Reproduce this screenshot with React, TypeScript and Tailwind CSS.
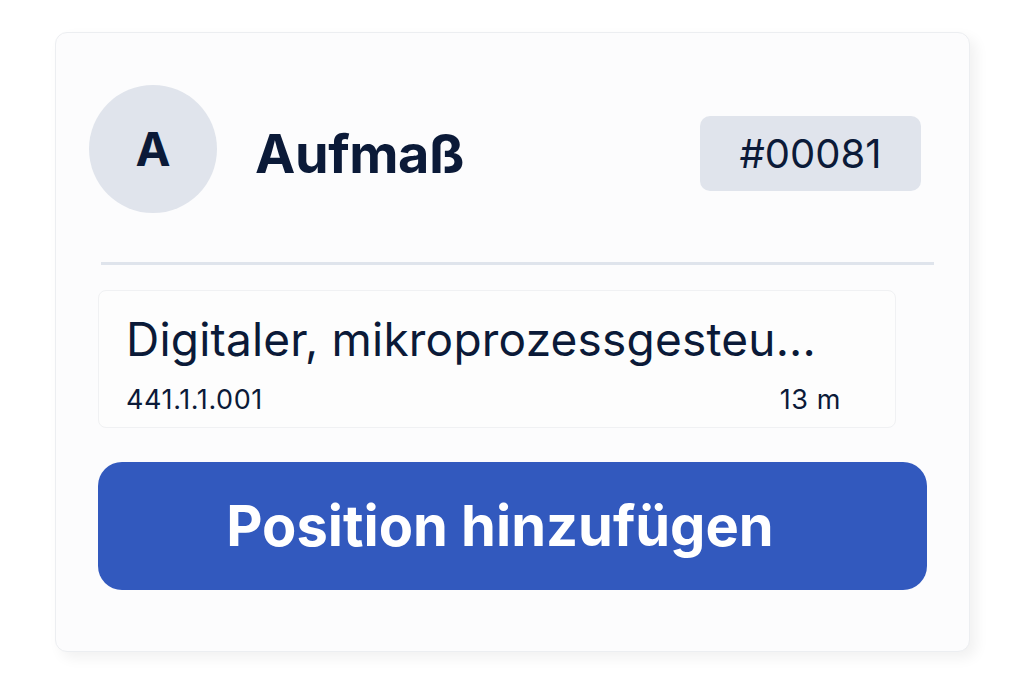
export default function App() {
  return (
    <div
      className="w-[1024px] h-[683px] bg-white pt-[32px] pl-[55px]"
      style={{ fontFamily: "Inter, 'Noto Sans', sans-serif" }}
    >
      <div className="w-[915px] h-[620px] rounded-[12px] bg-[#fcfcfd] border border-[#eceef1] shadow-[6px_6px_14px_rgba(0,0,0,0.06)] flex flex-col">
        {/* header */}
        <div className="flex items-center pt-[52px] pl-[33px] pr-[48px]">
          <div className="w-[128px] h-[128px] rounded-full bg-[#e0e4ec] flex items-center justify-center text-[47px] font-bold text-[#0b1a38]">
            A
          </div>
          <div className="ml-[38px] mt-[8px] text-[54px] font-bold text-[#0b1a38] tracking-[-0.4px]">Aufmaß</div>
          <div className="ml-auto mt-[9px] w-[221px] h-[75px] rounded-[10px] bg-[#e0e4ec] flex items-center justify-center text-[40px] text-[#0b1a38]">
            #00081
          </div>
        </div>

        <div className="mt-[49px] ml-[45px] mr-[35px] h-[3px] bg-[#dfe4ec]" />

        {/* position row */}
        <div className="mt-[25px] ml-[42px] w-[798px] h-[138px] rounded-[8px] border border-[#f0f1f3] bg-[#fdfdfd] pl-[27px] pr-[54px] pt-[20px]">
          <div className="text-[46px] text-[#0b1a38] leading-[56px] tracking-[0.2px]">Digitaler, mikroprozessgesteu...</div>
          <div className="mt-[17px] flex justify-between text-[27px] text-[#0b1a38] leading-[32px] tracking-[0.6px]">
            <span>441.1.1.001</span>
            <span>13 m</span>
          </div>
        </div>

        <button className="mt-[34px] ml-[42px] w-[829px] h-[128px] rounded-[24px] bg-[#3259be] text-white text-[56px] font-bold pr-[25px]">
          Position hinzufügen
        </button>
      </div>
    </div>
  );
}
